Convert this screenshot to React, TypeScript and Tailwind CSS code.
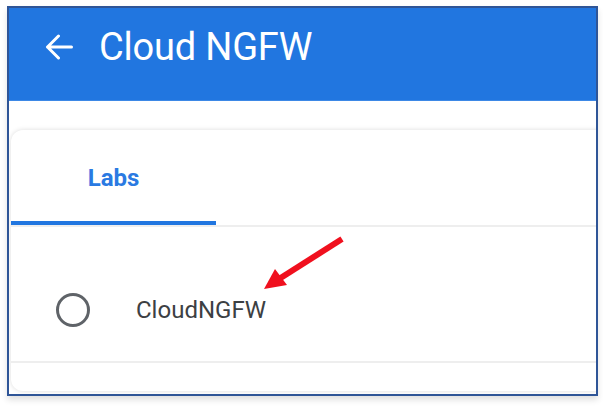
export default function App() {
    return (
        <div className="relative h-[406px] w-[603px] overflow-hidden bg-white pl-[7px] pt-[6px] font-['Roboto',sans-serif]">
            <div className="h-[390px] w-[591px] overflow-hidden border-2 border-[#2f5597] bg-white shadow-[0_4px_6px_rgba(0,0,0,0.12)]">
                <header className="flex h-[93px] items-center border-b border-[#3d88e6] bg-[#2176e0] pb-[14px] pl-[36px] text-white">
                    <svg width="28" height="26" viewBox="0 0 28 26" fill="none" stroke="currentColor" strokeWidth="3" strokeLinecap="round" strokeLinejoin="round">
                        <path d="M26.5 13H2.5M13.5 2L2.5 13L13.5 24" />
                    </svg>
                    <h1 className="ml-[26px] text-[38px] leading-none font-normal tracking-[-0.2px]">Cloud NGFW</h1>
                </header>

                <div className="pl-[2px] pt-[29px]">
                    <div className="w-[620px] overflow-hidden rounded-[12px] bg-white shadow-[0_0_5px_rgba(0,0,0,0.14)]">
                        <div className="flex h-[97px] border-b-2 border-[#eeeeee]">
                            <div className="flex w-[205px] justify-center border-b-4 border-[#2176e0] pt-[36px]">
                                <span className="text-[24px] leading-none font-bold text-[#2a7ae2]">Labs</span>
                            </div>
                        </div>

                        <div className="h-[136px] border-b-2 border-[#eeeeee] pl-[45px] pt-[66px]">
                            <div className="flex h-[34px] items-center">
                                <span className="h-[34px] w-[34px] rounded-full border-[3px] border-[#5f6368]" />
                                <span className="ml-[46px] text-[24px] leading-none text-[#3c4043]">CloudNGFW</span>
                            </div>
                        </div>

                        <div className="h-[28px]" />
                    </div>
                </div>
            </div>

            <svg className="absolute left-0 top-0" width="603" height="406" viewBox="0 0 603 406">
                <line x1="342" y1="239" x2="279" y2="279" stroke="#f0101e" strokeWidth="6" />
                <polygon points="264,289 275,269 287,285" fill="#f0101e" />
            </svg>
        </div>
    );
}
